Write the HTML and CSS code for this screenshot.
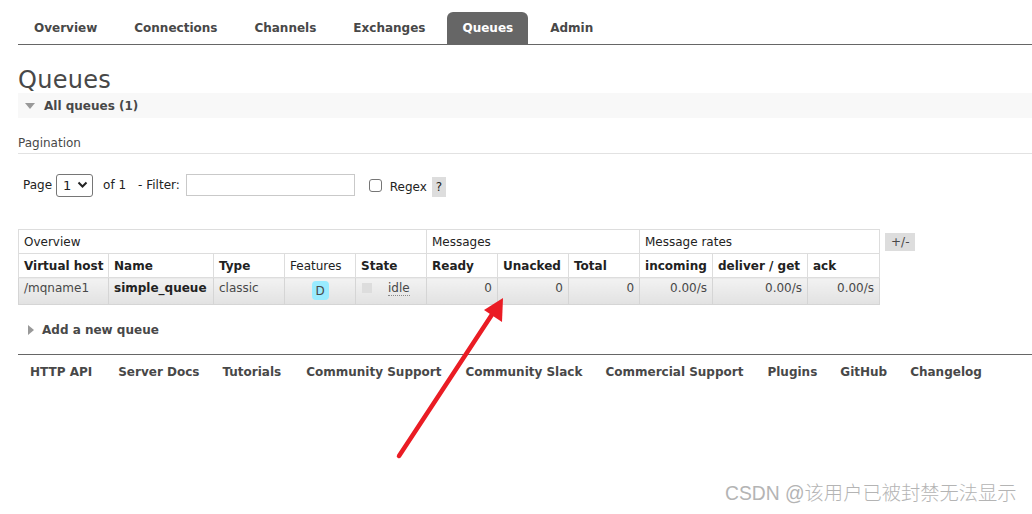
FILE: index.html
```html
<!DOCTYPE html>
<html>
<head>
<meta charset="utf-8">
<link rel="stylesheet" href="styles.css">
</head>
<body>
<div class="page">
  <ul class="nav">
    <li>Overview</li>
    <li>Connections</li>
    <li>Channels</li>
    <li>Exchanges</li>
    <li class="active">Queues</li>
    <li>Admin</li>
  </ul>
  <h1 class="title">Queues</h1>
  <div class="section-head"><span class="tri-down"></span>All queues (1)</div>
  <div class="pagination-label">Pagination</div>
  <div class="filter-row">
    <span>Page</span>
    <span class="select">1 <svg width="11" height="8" viewBox="0 0 11 8"><path d="M1.5 1.5 L5.5 5.5 L9.5 1.5" fill="none" stroke="#222" stroke-width="2"/></svg></span>
    <span class="of">of 1</span>
    <span>- Filter:</span>
    <span class="input"></span>
    <span class="checkbox"></span>
    <span class="regex">Regex</span>
    <span class="help">?</span>
  </div>
  <div class="table-wrap">
    <table class="queues">
      <colgroup>
        <col style="width:90px"><col style="width:105px"><col style="width:71px"><col style="width:71px"><col style="width:71px">
        <col style="width:71px"><col style="width:71px"><col style="width:71px">
        <col style="width:73px"><col style="width:95px"><col style="width:72px">
      </colgroup>
      <tr class="group">
        <td colspan="5">Overview</td>
        <td colspan="3">Messages</td>
        <td colspan="3">Message rates</td>
      </tr>
      <tr class="heads">
        <th>Virtual host</th><th>Name</th><th>Type</th><th class="normal">Features</th><th>State</th>
        <th>Ready</th><th>Unacked</th><th>Total</th>
        <th>incoming</th><th>deliver / get</th><th>ack</th>
      </tr>
      <tr class="row">
        <td>/mqname1</td>
        <td class="bold">simple_queue</td>
        <td>classic</td>
        <td class="c"><span class="badge">D</span></td>
        <td><span class="state-box"></span><span class="idle">idle</span></td>
        <td class="r">0</td><td class="r">0</td><td class="r">0</td>
        <td class="r">0.00/s</td><td class="r">0.00/s</td><td class="r">0.00/s</td>
      </tr>
    </table>
    <span class="plusminus">+/-</span>
  </div>
  <div class="add-queue"><span class="tri-right"></span>Add a new queue</div>
  <ul class="footer">
    <li>HTTP API</li>
    <li>Server Docs</li>
    <li>Tutorials</li>
    <li>Community Support</li>
    <li>Community Slack</li>
    <li>Commercial Support</li>
    <li>Plugins</li>
    <li>GitHub</li>
    <li>Changelog</li>
  </ul>
</div>
<svg class="arrow" width="1032" height="514" viewBox="0 0 1032 514">
  <line x1="399" y1="456" x2="493" y2="313" stroke="#ea1c24" stroke-width="4.5" stroke-linecap="round"/>
  <polygon points="503,298 502,322 484,310" fill="#ea1c24"/>
</svg>
<div class="watermark">CSDN @该用户已被封禁无法显示</div>
</body>
</html>
```
FILE: styles.css
```css
html, body { margin: 0; padding: 0; background: #fff; }
body {
  font-family: "DejaVu Sans", Verdana, sans-serif;
  font-size: 12px;
  color: #484848;
  width: 1032px;
  height: 514px;
  overflow: hidden;
  position: relative;
}
.page { padding-left: 18px; padding-top: 12px; }

.nav {
  list-style: none; margin: 0; padding: 0;
  display: flex; border-bottom: 1px solid #666;
  height: 32px;
}
.nav li {
  font-weight: bold; font-size: 12px; color: #484848;
  padding: 1px 15px 0 15px; line-height: 31px; margin-right: 7px;
}
.nav li:first-child { padding-left: 16px; }
.nav li.active { background: #666; color: #fff; border-radius: 6px 6px 0 0; }

.title {
  font-size: 24px; font-weight: normal; color: #484848;
  margin: 22px 0 0 0; line-height: 26px; letter-spacing: 0.3px;
}
.section-head {
  background: #f8f8f8; height: 25px; line-height: 24px;
  font-weight: bold; font-size: 12px; color: #484848;
  display: flex; align-items: center;
}
.tri-down {
  width: 0; height: 0; margin: 0 9px 0 7px;
  border-left: 5px solid transparent; border-right: 5px solid transparent;
  border-top: 6px solid #999;
}
.pagination-label {
  margin-top: 18px; font-size: 12px; color: #484848;
  padding-bottom: 3px; border-bottom: 1px solid #e2e2e2;
}
.filter-row {
  display: flex; align-items: center; height: 24px;
  margin-top: 19px; padding-left: 5px; font-size: 12px; color: #222;
}
.select {
  margin-left: 4px; width: 37px; height: 23px; border: 1px solid #767676; border-radius: 3px;
  box-sizing: border-box; display: flex; align-items: center; justify-content: space-between;
  padding: 0 4px 0 6px; font-size: 13px;
}
.of { margin-left: 10px; margin-right: 12px; }
.input {
  margin-left: 6px; width: 169px; height: 22px; border: 1px solid #c9c9c9; box-sizing: border-box;
}
.checkbox {
  margin-left: 14px; width: 13px; height: 13px; border: 1px solid #767676; border-radius: 3px; box-sizing: border-box;
}
.regex { margin-left: 8px; position: relative; top: 2px; }
.help {
  margin-left: 5px; background: #ddd; width: 14px; height: 20px; line-height: 20px; text-align: center;
  position: relative; top: 2px; font-size: 12px;
}

.table-wrap { margin-top: 32px; display: flex; align-items: flex-start; }
.queues {
  border-collapse: collapse; table-layout: fixed; width: 861px; font-size: 12px;
}
.queues td, .queues th {
  border: 1px solid #ddd; padding: 0 5px; text-align: left; white-space: nowrap; overflow: hidden;
}
.queues .group td { height: 23px; color: #222; font-weight: normal; }
.queues .heads th { height: 23px; color: #222; font-weight: bold; }
.queues .heads th.normal { font-weight: normal; }
.queues .row td {
  height: 23px; color: #484848; vertical-align: top; padding-top: 3px;
  background: linear-gradient(#f2f2f2, #e2e2e2);
  border-color: #d5d5d5;
}
.queues .row td.bold { font-weight: bold; color: #222; }
.queues td.r { text-align: right; }
.queues td.c { text-align: center; }
.badge {
  display: inline-block; background: #99ebff; border-radius: 4px; width: 17px; height: 19px;
  line-height: 21px; text-align: center; color: #484848; font-size: 12px;
}
.state-box { display: inline-block; width: 10px; height: 10px; background: #ddd; margin: 2px 0 0 1px; vertical-align: top; }
.idle { margin-left: 16px; border-bottom: 1px dotted #888; }
.plusminus {
  margin-left: 5px; margin-top: 4px; background: #ddd; padding: 0 6px; height: 18px; line-height: 18px;
  font-size: 12px; color: #484848;
}

.add-queue {
  margin-top: 18px; display: flex; align-items: center; font-weight: bold; font-size: 12px; color: #484848;
}
.tri-right {
  width: 0; height: 0; margin: 0 8px 0 10px;
  border-top: 5px solid transparent; border-bottom: 5px solid transparent;
  border-left: 6px solid #999;
}
.footer {
  list-style: none; margin: 17px 0 0 0; padding: 0 0 0 12px;
  border-top: 1px solid #666; display: flex;
}
.footer li {
  font-weight: bold; font-size: 12px; color: #484848; line-height: 34px; margin-right: 24px;
}
.footer li:nth-child(1) { margin-right: 26px; }
.footer li:nth-child(2) { margin-right: 23px; }
.footer li:nth-child(3) { margin-right: 25px; }
.footer li:nth-child(5) { margin-right: 23px; }
.footer li:nth-child(7) { margin-right: 23px; }
.footer li:nth-child(8) { margin-right: 23px; }

.arrow { position: absolute; left: 0; top: 0; pointer-events: none; }
.watermark {
  position: absolute; left: 725px; top: 481px;
  font-family: "Liberation Sans", "Noto Sans CJK SC", sans-serif;
  font-size: 19.3px; color: #b4b4b4; line-height: 26px; font-weight: 300;
}
```
